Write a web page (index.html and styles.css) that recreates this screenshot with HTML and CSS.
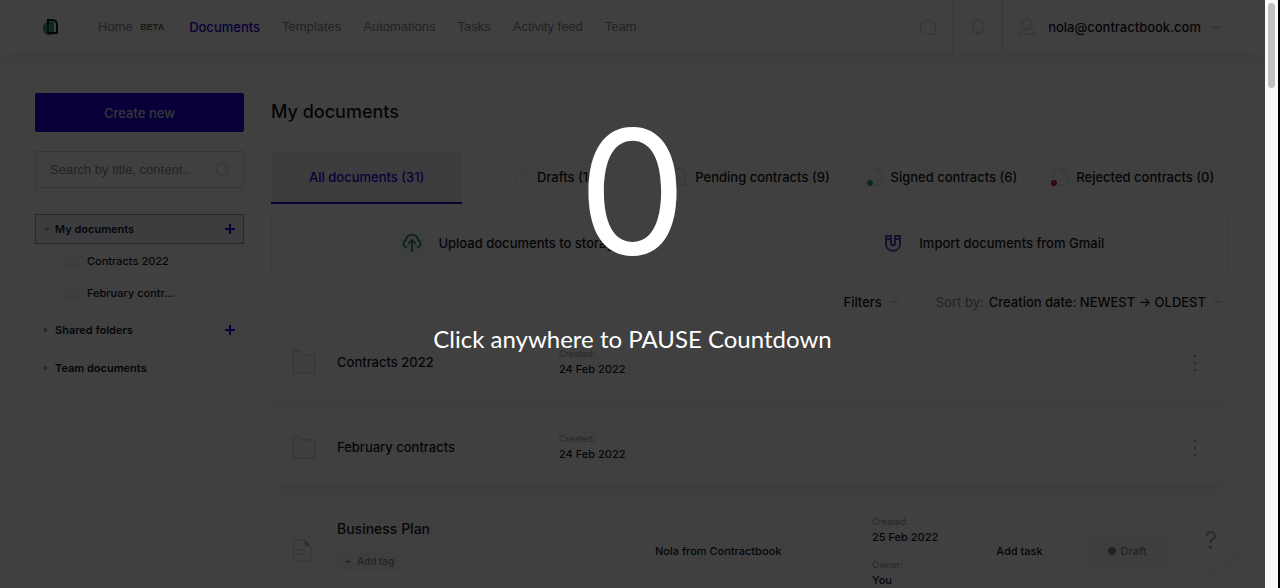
FILE: index.html
```html
<!DOCTYPE html>
<html lang="en">
<head>
    <meta charset="UTF-8">
    <meta name="viewport" content="width=device-width, initial-scale=1.0">
    <title>My documents</title>
    <link rel="stylesheet" href="styles.css">
</head>
<body>

    <div class="screen">
        <header class="header">
            <a href="#" class="logo" aria-label="Home page">
                <svg width="18" height="20" viewBox="0 0 18 20" fill="none">
                    <path d="M7 4C2 5 0 9 1 13c1 4 4 6 9 5l2-2V5z" fill="#4fa587"/>
                    <path d="M6 3h4c3 0 5 2 5 5v8H6z" stroke="#05251c" stroke-width="2"/>
                    <path d="M6 15V9c0-3 5-3 5 0v6" stroke="#1d8a66" stroke-width="1"/>
                </svg>
            </a>
            <nav class="nav">
                <a href="#">Home <span class="beta">BETA</span></a>
                <a href="#" class="active">Documents</a>
                <a href="#">Templates</a>
                <a href="#">Automations</a>
                <a href="#">Tasks</a>
                <a href="#">Activity feed</a>
                <a href="#">Team</a>
            </nav>
            <div class="header-right">
                <button class="header-icon" aria-label="Chat">
                    <svg width="20" height="20" viewBox="0 0 20 20" fill="none" stroke="#c4c4c4"><path d="M4 16c-4-5-1-13 6-13 8 0 10 9 5 13l2 1H8"/></svg>
                </button>
                <button class="header-icon" aria-label="Notifications">
                    <svg width="20" height="20" viewBox="0 0 20 20" fill="none" stroke="#c4c4c4"><path d="M3 15h14l-2-3V8c0-7-10-7-10 0v4zM8 15c0 3 4 3 4 0"/></svg>
                </button>
                <button class="account">
                    <svg width="20" height="20" viewBox="0 0 20 20" fill="none" stroke="#c4c4c4"><circle cx="10" cy="7" r="5"/><path d="M2 17c1-4 4-5 8-5s7 1 8 5z"/></svg>
                    <span>nola@contractbook.com</span>
                    <i class="chevron"></i>
                </button>
            </div>
        </header>

        <div class="container">
            <aside class="sidebar">
                <button class="create">Create new</button>
                <div class="search">
                    <input type="text" placeholder="Search by title, content.." aria-label="Search by title, content">
                    <svg width="16" height="16" viewBox="0 0 16 16" fill="none" stroke="#c4c4c4"><circle cx="7" cy="7" r="6"/><path d="M11 11l4 4"/></svg>
                </div>
                <div class="tree">
                    <div class="tree-item selected">
                        <i class="arrow down"></i>
                        <span>My documents</span>
                        <button class="plus" aria-label="Add folder"></button>
                    </div>
                    <div class="tree-child"><i class="small-folder"></i>Contracts 2022</div>
                    <div class="tree-child"><i class="small-folder"></i>February contr...</div>
                    <div class="tree-item">
                        <i class="arrow"></i>
                        <span>Shared folders</span>
                        <button class="plus" aria-label="Add shared folder"></button>
                    </div>
                    <div class="tree-item">
                        <i class="arrow"></i>
                        <span>Team documents</span>
                    </div>
                </div>
            </aside>

            <main class="content">
                <h1>My documents</h1>
                <div class="tabs">
                    <button class="tab active">All documents (31)</button>
                    <button class="tab">
                        <svg width="14" height="18" viewBox="0 0 14 18" fill="none" stroke="#ececec"><path d="M1 1h8l4 4v12H1zM9 1v4h4"/></svg>
                        Drafts (16)
                    </button>
                    <button class="tab">
                        <svg width="18" height="18" viewBox="0 0 18 18" fill="none" stroke="#d0d0d0"><path d="M3 1h9l4 4v12H3zM6 10h6"/></svg>
                        Pending contracts (9)
                    </button>
                    <button class="tab">
                        <svg width="18" height="20" viewBox="0 0 18 20" fill="none" stroke="#e2e2e2"><path d="M4 1h8l5 5v12H8M12 1v5h5"/><circle cx="5" cy="16" r="3" fill="#22a866" stroke="none"/></svg>
                        Signed contracts (6)
                    </button>
                    <button class="tab">
                        <svg width="18" height="20" viewBox="0 0 18 20" fill="none" stroke="#e2e2e2"><path d="M4 12V1h8l5 5v12H8M12 1v5h5"/><circle cx="4" cy="16" r="3" fill="#c8103c" stroke="none"/><path d="M3 16h2" stroke="#c8a0ac"/></svg>
                        Rejected contracts (0)
                    </button>
                </div>

                <div class="upload">
                    <button>
                        <svg width="34" height="34" viewBox="0 0 34 34" fill="none" stroke="#3c9470" stroke-width="2"><circle cx="17" cy="17" r="17" fill="#f8fcfa" stroke="none"/><path d="M12 21c-4 0-5-5-1-7 1-7 11-7 12 0 4 2 3 7-1 7M17 26V15M13 18l4-4 4 4"/></svg>
                        Upload documents to storage
                    </button>
                    <button>
                        <svg width="34" height="34" viewBox="0 0 34 34" fill="none" stroke="#5540b0" stroke-width="2"><circle cx="17" cy="17" r="17" fill="#fafafd" stroke="none"/><path d="M10 10h5v7c0 3 4 3 4 0v-7h5v8c0 9-14 9-14 0zM10 13h5M19 13h5"/></svg>
                        Import documents from Gmail
                    </button>
                </div>

                <div class="filters">
                    <button>Filters <i class="chevron"></i></button>
                    <div class="sort">
                        <span class="muted">Sort by:</span>
                        <button>Creation date: NEWEST → OLDEST <i class="chevron"></i></button>
                    </div>
                </div>

                <div class="list">
                    <div class="row">
                        <svg width="26" height="28" viewBox="0 0 26 28" fill="#f8f8f8" stroke="#c4c4c4"><path d="M2 25V3h7l4 4h11v18z"/></svg>
                        <h2>Contracts 2022</h2>
                        <p class="meta"><span>Created:</span>24 Feb 2022</p>
                        <button class="dots" aria-label="More">⋮</button>
                    </div>
                    <div class="row">
                        <svg width="26" height="28" viewBox="0 0 26 28" fill="#f8f8f8" stroke="#c4c4c4"><path d="M2 25V3h7l4 4h11v18z"/></svg>
                        <h2>February contracts</h2>
                        <p class="meta"><span>Created:</span>24 Feb 2022</p>
                        <button class="dots" aria-label="More">⋮</button>
                    </div>
                    <div class="row document">
                        <svg width="26" height="28" viewBox="0 0 26 28" fill="none" stroke="#d0d0d0"><path d="M3 26V3h11l6 6v15H7M6 13h9M6 17h9"/><path d="M14 3v6h6z" fill="#b0b0b0"/></svg>
                        <div class="name">
                            <h2>Business Plan</h2>
                            <button class="tag">+ &nbsp;Add tag</button>
                        </div>
                        <p class="author">Nola from Contractbook</p>
                        <div class="details">
                            <p class="meta"><span>Created:</span>25 Feb 2022</p>
                            <p class="meta"><span>Owner:</span>You</p>
                        </div>
                        <button class="task">Add task</button>
                        <span class="status">Draft</span>
                    </div>
                </div>
            </main>
        </div>

        <button class="help" aria-label="Help">?</button>

        <div class="overlay">
            <div class="count">0</div>
            <div class="hint">Click anywhere to PAUSE Countdown</div>
        </div>
    </div>

    <div class="scrollbar"><div class="thumb"></div></div>

</body>
</html>
```
FILE: styles.css
```css
* {
    box-sizing: border-box;
}

body {
    margin: 0;
    height: 100vh;
    display: flex;
    overflow: hidden;
    font-family: Inter, "Liberation Sans", sans-serif;
    font-size: 13px;
    font-weight: 500;
    color: #16161c;
    background: #fff;
}

h1, h2, p {
    margin: 0;
}

button {
    padding: 0;
    border: none;
    background: none;
    font: inherit;
    color: inherit;
    cursor: pointer;
}

a {
    color: inherit;
    text-decoration: none;
}

.screen {
    position: relative;
    flex: 1;
    overflow: hidden;
}

/* header */
.header {
    display: flex;
    align-items: center;
    height: 53px;
    padding-left: 42px;
    box-shadow: 0 2px 20px rgba(0, 0, 0, 0.08);
}

.logo {
    display: flex;
    width: 56px;
}

.nav {
    display: flex;
    gap: 22px;
    font-family: "Liberation Sans", sans-serif;
    font-weight: 400;
    color: #888;
}

.nav .active {
    font-family: Inter, sans-serif;
    font-weight: 500;
    color: #2400d0;
}

.beta {
    margin: 0 3px 0 4px;
    font-size: 9px;
    font-weight: 700;
    color: #66664c;
    vertical-align: 1px;
    background: #fafae8;
}

.header-right {
    display: flex;
    align-self: stretch;
    margin-left: auto;
}

.header-icon {
    display: flex;
    align-items: center;
    justify-content: center;
    width: 50px;
    border-right: 1px solid #e4e4e4;
}

.account {
    display: flex;
    align-items: center;
    padding: 0 45px 0 14px;
    gap: 11px;
}

.chevron {
    display: inline-block;
    width: 8px;
    height: 2px;
    background: #dcdcdc;
}

/* page */
.container {
    display: flex;
    gap: 27px;
    padding: 40px 37px 0 35px;
}

.sidebar {
    width: 209px;
    flex-shrink: 0;
}

.create {
    width: 100%;
    height: 39px;
    border-radius: 2px;
    background: #1e00e4;
    color: #d8d8e8;
}

.search {
    display: flex;
    align-items: center;
    height: 37px;
    margin: 19px 0 26px;
    padding: 0 12px 0 14px;
    border: 1px solid #d8d8d8;
}

.search input {
    flex: 1;
    min-width: 0;
    padding: 0;
    border: none;
    outline: none;
    background: none;
    font: 400 13px "Liberation Sans", sans-serif;
}

.search input::placeholder {
    color: #8c8c8c;
}

.tree {
    font-size: 11px;
    font-weight: 600;
}

.tree-item {
    display: flex;
    align-items: center;
    gap: 7px;
    height: 30px;
    margin-bottom: 8px;
    padding: 0 8px;
    border: 1px solid transparent;
}

.tree-item.selected {
    margin-bottom: 1px;
    background: #f4f3fb;
    border-color: #9c9ab8;
}

.tree-child {
    display: flex;
    align-items: center;
    gap: 8px;
    height: 32px;
    padding-left: 30px;
    font-weight: 500;
}

.tree-child + .tree-item {
    margin-top: 6px;
}

.small-folder {
    width: 14px;
    height: 12px;
    background: #f2f2f2;
}

.arrow {
    width: 4px;
    border: 3px solid transparent;
    border-left: 4px solid #999;
    border-right: none;
}

.arrow.down {
    width: 6px;
    margin-right: -2px;
    border: 3px solid transparent;
    border-top: 3px solid #999;
    border-bottom: none;
}

.plus {
    width: 10px;
    height: 10px;
    margin-left: auto;
    background: linear-gradient(#2000d0, #2000d0) center / 10px 2px no-repeat,
                linear-gradient(#2000d0, #2000d0) center / 2px 10px no-repeat;
}

/* content */
.content {
    flex: 1;
    min-width: 0;
}

h1 {
    font-size: 18px;
    line-height: 38px;
    font-weight: 500;
}

.tabs {
    display: grid;
    grid-template-columns: repeat(5, 1fr);
    height: 53px;
    margin-top: 20px;
}

.tab {
    display: flex;
    align-items: center;
    justify-content: center;
    gap: 8px;
    border-bottom: 2px solid transparent;
    white-space: nowrap;
}

.tab.active {
    color: #2400d0;
    background: #f4f3fb;
    border-color: #2400d0;
}

.upload {
    display: grid;
    grid-template-columns: 1fr 1fr;
    gap: 8px;
    height: 62px;
    margin-top: 8px;
    border: 1px solid #f0f0f0;
    box-shadow: 0 2px 10px rgba(0, 0, 0, 0.02);
}

.upload button {
    display: flex;
    align-items: center;
    justify-content: center;
    gap: 9px;
}

.filters {
    display: flex;
    justify-content: flex-end;
    align-items: center;
    gap: 38px;
    height: 45px;
    margin: 5px 6px 0 0;
}

.filters button {
    display: flex;
    align-items: center;
    gap: 8px;
}

.sort {
    display: flex;
    gap: 5px;
}

.muted {
    font-weight: 400;
    color: #888;
}

.row {
    display: grid;
    grid-template-columns: 46px 222px 1fr 20px;
    align-items: center;
    height: 75px;
    margin-bottom: 10px;
    padding: 0 23px 0 20px;
    box-shadow: 0 5px 14px rgba(0, 0, 0, 0.05);
}

.row.document {
    grid-template-columns: 46px 318px 217px 112px 103px 80px;
    height: 114px;
}

h2 {
    font-size: 13px;
    line-height: 20px;
    font-weight: 500;
}

.name {
    padding-bottom: 12px;
}

.name h2 {
    font-size: 14px;
}

.meta {
    font-size: 11px;
    line-height: 17px;
}

.meta span {
    display: block;
    font-size: 9px;
    line-height: 15px;
    font-weight: 400;
    color: #999;
}

.meta + .meta {
    margin-top: 11px;
}

.author {
    font-size: 11px;
}

.dots {
    font-size: 20px;
    color: #aaa;
}

.tag {
    margin-top: 12px;
    padding: 2px 8px;
    background: #f8f8fb;
    font-size: 10px;
    line-height: 16px;
    color: #888;
}

.task {
    width: 71px;
    height: 34px;
    border: 1px solid #f6f6f6;
    font-size: 11px;
}

.status {
    display: flex;
    align-items: center;
    justify-content: center;
    gap: 5px;
    height: 34px;
    background: #f6f6f6;
    font-size: 11px;
    color: #888;
}

.status::before {
    content: "";
    width: 8px;
    height: 8px;
    border-radius: 50%;
    background: #888;
}

.help {
    position: absolute;
    right: 26px;
    bottom: 20px;
    width: 56px;
    height: 56px;
    border-radius: 50%;
    background: #fff;
    box-shadow: 0 3px 12px rgba(0, 0, 0, 0.05);
    font-size: 24px;
    font-weight: 400;
    color: #aaa;
}

/* countdown */
.overlay {
    position: absolute;
    inset: 0;
    padding-top: 86px;
    background: rgba(0, 0, 0, 0.75);
    color: #fff;
    text-align: center;
}

.count {
    font-family: Inter, sans-serif;
    font-size: 172px;
    line-height: 211px;
    font-weight: 400;
}

.hint {
    margin-top: 26px;
    font-family: Lato, sans-serif;
    font-size: 24px;
    line-height: 32px;
    font-weight: 400;
}

.scrollbar {
    width: 15px;
    padding: 3px;
    border-right: 2px solid #000;
    background: #fafafa;
}

.thumb {
    height: 85px;
    border-radius: 4px;
    background: #c1c1c1;
}
```
